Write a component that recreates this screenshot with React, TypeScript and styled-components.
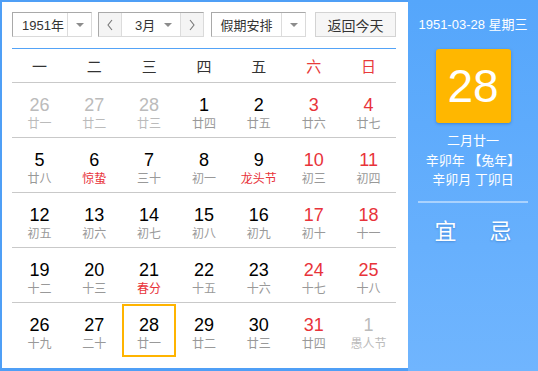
import React from "react";
import styled, { createGlobalStyle } from "styled-components";

const Global = createGlobalStyle`
  html, body { margin: 0; padding: 0; background: #fff; }
  body { font-family: "Liberation Sans", "Noto Sans CJK SC", Arial, sans-serif; }
  * { box-sizing: border-box; }
`;

const Page = styled.div`
  width: 538px;
  height: 371px;
  display: flex;
  background: #4f9ff6;
`;

const LeftPanel = styled.div`
  width: 406px;
  margin: 2px 0 3px 2px;
  background: #fff;
  padding: 10px 12px 0 10px;
  display: flex;
  flex-direction: column;
`;

const Toolbar = styled.div`
  display: flex;
  align-items: center;
  height: 26px;
  padding-bottom: 1px;
`;

const SelectBox = styled.div<{ $w: number; $ml?: number }>`
  width: ${(p) => p.$w}px;
  margin-left: ${(p) => p.$ml ?? 0}px;
  height: 25px;
  display: flex;
  border: 1px solid #a9a9a9;
  border-right-color: #dadada;
  border-bottom-color: #dadada;
  background: #fff;
  font-size: 13px;
  color: #333;
`;

const SelectText = styled.div<{ $w: number; $pl?: number }>`
  width: ${(p) => p.$w}px;
  display: flex;
  align-items: center;
  justify-content: center;
  padding-left: ${(p) => p.$pl ?? 0}px;
  border-right: 1px solid #dcdcdc;
`;

const ArrowCell = styled.div`
  flex: 1;
  display: flex;
  align-items: center;
  justify-content: center;
`;

const Caret = styled.span`
  width: 0;
  height: 0;
  border-left: 4px solid transparent;
  border-right: 4px solid transparent;
  border-top: 4px solid #8c8c8c;
`;

const NavButton = styled.div<{ $side: "l" | "r" }>`
  width: 23px;
  display: flex;
  align-items: center;
  justify-content: center;
  background: #f4f4f4;
  ${(p) => (p.$side === "l" ? "border-right: 1px solid #dcdcdc;" : "border-left: 1px solid #dcdcdc;")}
`;

const MonthText = styled.div`
  flex: 1;
  display: flex;
  align-items: center;
  padding-left: 13px;
  padding-right: 8px;
  justify-content: space-between;
`;

const TodayButton = styled.div`
  margin-left: 9px;
  width: 81px;
  height: 25px;
  border: 1px solid #d3d3d3;
  background: #f6f6f6;
  font-size: 14px;
  color: #333;
  display: flex;
  align-items: center;
  justify-content: center;
`;

const BlueLine = styled.div`
  margin-top: 10px;
  height: 1px;
  background: #53a3f7;
`;

const Grid = styled.div`
  display: grid;
  grid-template-columns: repeat(7, 1fr);
`;

const HeadCell = styled.div<{ $red?: boolean }>`
  height: 34px;
  display: flex;
  align-items: center;
  justify-content: center;
  font-size: 15px;
  color: ${(p) => (p.$red ? "#e83a3a" : "#333")};
  border-bottom: 1px solid #c9c9c9;
`;

const DayCell = styled.div<{ $last?: boolean }>`
  height: 55px;
  display: flex;
  align-items: center;
  justify-content: center;
  border-bottom: ${(p) => (p.$last ? "none" : "1px solid #c9c9c9")};
`;

const DayInner = styled.div<{ $sel?: boolean }>`
  width: 54px;
  height: 53px;
  display: flex;
  flex-direction: column;
  align-items: center;
  padding-top: ${(p) => (p.$sel ? 9 : 11)}px;
  border: ${(p) => (p.$sel ? "2px solid #ffb400" : "none")};
`;

const DayNum = styled.div<{ $c: string }>`
  font-size: 18px;
  line-height: 20px;
  color: ${(p) => p.$c};
`;

const Lunar = styled.div<{ $c: string }>`
  font-size: 12px;
  line-height: 16px;
  margin-top: 1px;
  color: ${(p) => p.$c};
`;

const RightPanel = styled.div`
  flex: 1;
  background: linear-gradient(#55a6fb, #70b5fe);
  display: flex;
  flex-direction: column;
  align-items: center;
  color: #fff;
  padding-top: 16px;
`;

const DateLine = styled.div`
  font-size: 13px;
  line-height: 18px;
`;

const BigDay = styled.div`
  margin-top: 15px;
  width: 75px;
  height: 74px;
  background: #ffb700;
  border-radius: 3px;
  box-shadow: 0 1px 3px rgba(0, 60, 140, 0.35);
  display: flex;
  align-items: center;
  justify-content: center;
  font-size: 46px;
  color: #fff;
`;

const InfoText = styled.div`
  margin-top: 8px;
  font-size: 13px;
  line-height: 19.5px;
  text-align: center;
`;

const Divider = styled.div`
  margin-top: 11px;
  width: 110px;
  height: 2px;
  background: rgba(255, 255, 255, 0.45);
`;

const YiJi = styled.div`
  margin-top: 10px;
  width: 110px;
  display: flex;
  justify-content: space-around;
  font-size: 22px;
  text-shadow: 0 1px 2px rgba(0, 60, 140, 0.3);
`;

const Chevron = ({ dir }: { dir: "l" | "r" }) => (
  <svg width="8" height="12" viewBox="0 0 8 12">
    <path
      d={dir === "l" ? "M6 1 L2 6 L6 11" : "M2 1 L6 6 L2 11"}
      fill="none"
      stroke="#777"
      strokeWidth="1.1"
    />
  </svg>
);

type D = { n: string; l: string; k: "out" | "n" | "w"; lr?: boolean; sel?: boolean };

const days: D[] = [
  { n: "26", l: "廿一", k: "out" }, { n: "27", l: "廿二", k: "out" }, { n: "28", l: "廿三", k: "out" },
  { n: "1", l: "廿四", k: "n" }, { n: "2", l: "廿五", k: "n" }, { n: "3", l: "廿六", k: "w" }, { n: "4", l: "廿七", k: "w" },
  { n: "5", l: "廿八", k: "n" }, { n: "6", l: "惊蛰", k: "n", lr: true }, { n: "7", l: "三十", k: "n" },
  { n: "8", l: "初一", k: "n" }, { n: "9", l: "龙头节", k: "n", lr: true }, { n: "10", l: "初三", k: "w" }, { n: "11", l: "初四", k: "w" },
  { n: "12", l: "初五", k: "n" }, { n: "13", l: "初六", k: "n" }, { n: "14", l: "初七", k: "n" },
  { n: "15", l: "初八", k: "n" }, { n: "16", l: "初九", k: "n" }, { n: "17", l: "初十", k: "w" }, { n: "18", l: "十一", k: "w" },
  { n: "19", l: "十二", k: "n" }, { n: "20", l: "十三", k: "n" }, { n: "21", l: "春分", k: "n", lr: true },
  { n: "22", l: "十五", k: "n" }, { n: "23", l: "十六", k: "n" }, { n: "24", l: "十七", k: "w" }, { n: "25", l: "十八", k: "w" },
  { n: "26", l: "十九", k: "n" }, { n: "27", l: "二十", k: "n" }, { n: "28", l: "廿一", k: "n", sel: true },
  { n: "29", l: "廿二", k: "n" }, { n: "30", l: "廿三", k: "n" }, { n: "31", l: "廿四", k: "w" }, { n: "1", l: "愚人节", k: "out" },
];

const week = ["一", "二", "三", "四", "五", "六", "日"];

export default function App() {
  return (
    <>
      <Global />
      <Page>
        <LeftPanel>
          <Toolbar>
            <SelectBox $w={80}>
              <SelectText $w={55} $pl={6}>1951年</SelectText>
              <ArrowCell><Caret /></ArrowCell>
            </SelectBox>
            <SelectBox $w={106} $ml={6}>
              <NavButton $side="l"><Chevron dir="l" /></NavButton>
              <MonthText>3月<Caret /></MonthText>
              <NavButton $side="r"><Chevron dir="r" /></NavButton>
            </SelectBox>
            <SelectBox $w={95} $ml={7}>
              <SelectText $w={70}>假期安排</SelectText>
              <ArrowCell><Caret /></ArrowCell>
            </SelectBox>
            <TodayButton>返回今天</TodayButton>
          </Toolbar>
          <BlueLine />
          <Grid>
            {week.map((w, i) => (
              <HeadCell key={w} $red={i >= 5}>{w}</HeadCell>
            ))}
            {days.map((d, i) => {
              const numC = d.k === "out" ? "#bbbbbb" : d.k === "w" ? "#e8333a" : "#000";
              const lunC = d.lr ? "#e8333a" : d.k === "out" ? "#bbbbbb" : "#999999";
              return (
                <DayCell key={i} $last={i >= 28}>
                  <DayInner $sel={d.sel}>
                    <DayNum $c={numC}>{d.n}</DayNum>
                    <Lunar $c={lunC}>{d.l}</Lunar>
                  </DayInner>
                </DayCell>
              );
            })}
          </Grid>
        </LeftPanel>
        <RightPanel>
          <DateLine>1951-03-28 星期三</DateLine>
          <BigDay>28</BigDay>
          <InfoText>
            二月廿一
            <br />
            辛卯年 【兔年】
            <br />
            辛卯月 丁卯日
          </InfoText>
          <Divider />
          <YiJi>
            <span>宜</span>
            <span>忌</span>
          </YiJi>
        </RightPanel>
      </Page>
    </>
  );
}
